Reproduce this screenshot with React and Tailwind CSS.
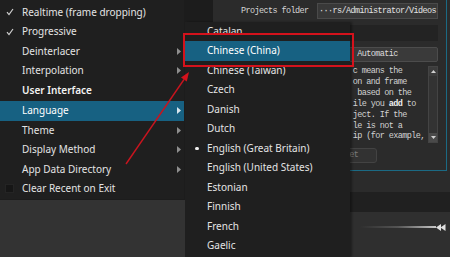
import React from "react";

const Arrow = ({ light }) => (
  <svg width="4" height="7" viewBox="0 0 4 7" className="shrink-0">
    <polygon points="0,0 4,3.5 0,7" fill={light ? "#d8e6ee" : "#8e8e8e"} />
  </svg>
);

const Check = () => (
  <svg width="8" height="8" viewBox="0 0 8 8">
    <path d="M1 4.2 L3 6.6 L7 1" fill="none" stroke="#cfcfcf" strokeWidth="1.2" />
  </svg>
);

function MenuRow({ label, check, arrow, active, box }) {
  return (
    <div
      className={`h-[19.5px] flex items-center pr-[3px] ${active ? "bg-[#176182] text-white" : ""}`}
    >
      <div className="w-[22px] h-full flex items-center justify-center pr-[3px]">
        {check && <Check />}
        {box && <div className="w-[9px] h-[9px] bg-[#161616] border border-[#242424]" />}
      </div>
      <span className="flex-1 whitespace-nowrap">{label}</span>
      {arrow && <Arrow light={active} />}
    </div>
  );
}

function SubRow({ label, active, bullet }) {
  return (
    <div className={`h-[19.5px] flex items-center ${active ? "bg-[#176182] text-white" : ""}`}>
      <div className="w-[22px] h-full flex items-center pl-[10px]">
        {bullet && <div className="w-[3.5px] h-[3.5px] rounded-full bg-[#f0f0f0]" />}
      </div>
      <span className="whitespace-nowrap">{label}</span>
    </div>
  );
}

export default function App() {
  const mono = "font-['Liberation_Mono',monospace] text-[8.5px] tracking-[-0.6px]";
  const languages = [
    "Catalan",
    "Chinese (China)",
    "Chinese (Taiwan)",
    "Czech",
    "Danish",
    "Dutch",
    "English (Great Britain)",
    "English (United States)",
    "Estonian",
    "Finnish",
    "French",
    "Gaelic",
  ];
  return (
    <div className="relative w-[450px] h-[257px] overflow-hidden bg-[#1c1c1c] flex">
      {/* left app background */}
      <div className="w-[213px] flex flex-col">
        <div className="h-[200px]" />
        <div className="flex-1 w-[185px] bg-[#333333]" />
      </div>

      {/* right dialog background */}
      <div className="w-[237px] flex flex-col">
        <div className="h-[192px] bg-[#2b2b2b] text-[#d6d6d6]">
          <div className="w-[234px] h-[171px] border-r border-b border-[#1b6a84] flex flex-col">
            <div className="h-[22px] flex items-center">
              <span className={`${mono} ml-[28px] whitespace-nowrap`}>Projects folder</span>
              <div
                className={`${mono} ml-auto mr-[8px] w-[121px] h-[16px] bg-[#383838] border border-[#4a4a4a] flex items-center pl-[1px] overflow-hidden whitespace-nowrap text-[#e2e2e2]`}
              >
                ···rs/Administrator/Videos
              </div>
            </div>
            <div className="ml-auto mr-[8px] mt-[3px] w-[121px] h-[16px] bg-[#232323]" />
            <div
              className={`${mono} ml-auto mr-[8px] mt-[6px] w-[121px] h-[15px] bg-[#3a3a3a] border border-[#4c4c4c] rounded-[2px] flex items-center justify-center text-[#dcdcdc]`}
            >
              Automatic
            </div>
            <div className="ml-auto mr-[8px] mt-[4px] w-[121px] h-[77px] flex">
              <div className={`${mono} flex-1 pl-[35.7px] leading-[10.9px] whitespace-pre text-[#d2d2d2]`}>
                <div>c means the</div>
                <div>on and frame</div>
                <div> based on the</div>
                <div>
                  ile you <b className="font-bold text-[#eeeeee]">add</b> to
                </div>
                <div>ject. If the</div>
                <div>le is not a</div>
                <div>ip (for example,</div>
              </div>
              <div className="w-[10px] bg-[#333333] border border-[#444444] flex flex-col justify-between">
                <div className="h-[9px] bg-[#3c3c3c] flex items-center justify-center">
                  <svg width="5" height="3" viewBox="0 0 5 3">
                    <polygon points="0,3 2.5,0 5,3" fill="#d0d0d0" />
                  </svg>
                </div>
                <div className="h-[9px] bg-[#4a4a4a] flex items-center justify-center">
                  <svg width="5" height="3" viewBox="0 0 5 3">
                    <polygon points="0,0 2.5,3 5,0" fill="#d0d0d0" />
                  </svg>
                </div>
              </div>
            </div>
            <div
              className={`${mono} ml-[104px] mt-[5px] w-[60px] h-[15px] bg-[#323232] border border-[#434343] rounded-[3px] flex items-center justify-center text-[#7a7a7a]`}
            >
              Reset
            </div>
          </div>
        </div>
        <div className="h-[20px] bg-[#202020]" />
        <div className="flex-1 bg-[#2f2f2f] flex items-start pt-[13px] pl-[147px]">
          <div className="w-[76px] h-[2px] mt-[1px] bg-gradient-to-r from-[#2f2f2f] via-[#555555] to-[#c8c8c8]" />
          <svg width="10" height="7" viewBox="0 0 10 7" className="-mt-[1.5px]">
            <polygon points="0,3.5 5,0 5,7" fill="#e0e0e0" />
            <polygon points="4.5,3.5 9.5,0 9.5,7" fill="#e0e0e0" />
          </svg>
        </div>
      </div>

      {/* main context menu */}
      <div className="absolute left-0 top-0 w-[184px] h-[199px] bg-[#1f1f1f] pt-[2.5px] font-['Noto_Sans',sans-serif] text-[10px] text-[#e4e4e4]">
        <MenuRow label="Realtime (frame dropping)" check />
        <MenuRow label="Progressive" check />
        <MenuRow label="Deinterlacer" arrow />
        <MenuRow label="Interpolation" arrow />
        <div className="h-[20.5px] flex items-center pl-[22px] font-semibold text-[#f2f2f2]">
          User Interface
        </div>
        <MenuRow label="Language" arrow active />
        <MenuRow label="Theme" arrow />
        <MenuRow label="Display Method" arrow />
        <MenuRow label="App Data Directory" arrow />
        <MenuRow label="Clear Recent on Exit" box />
      </div>

      {/* language submenu */}
      <div className="absolute left-[185px] top-[21.5px] w-[165px] bottom-0 bg-[#1f1f1f] shadow-[2px_0_2px_rgba(0,0,0,0.35)] font-['Noto_Sans',sans-serif] text-[10px] text-[#e4e4e4]">
        {languages.map((l) => (
          <SubRow
            key={l}
            label={l}
            active={l === "Chinese (China)"}
            bullet={l === "English (Great Britain)"}
          />
        ))}
      </div>

      {/* red annotation */}
      <div className="absolute left-[183px] top-[33px] w-[171px] h-[34px] border-2 border-[#d4121c]" />
      <svg className="absolute left-0 top-0 pointer-events-none" width="450" height="257">
        <line x1="126" y1="164" x2="184" y2="79.5" stroke="#c8141e" strokeWidth="1.4" />
        <polygon points="189,72 186.8,81.4 181,77.4" fill="#d4121c" />
      </svg>
    </div>
  );
}
